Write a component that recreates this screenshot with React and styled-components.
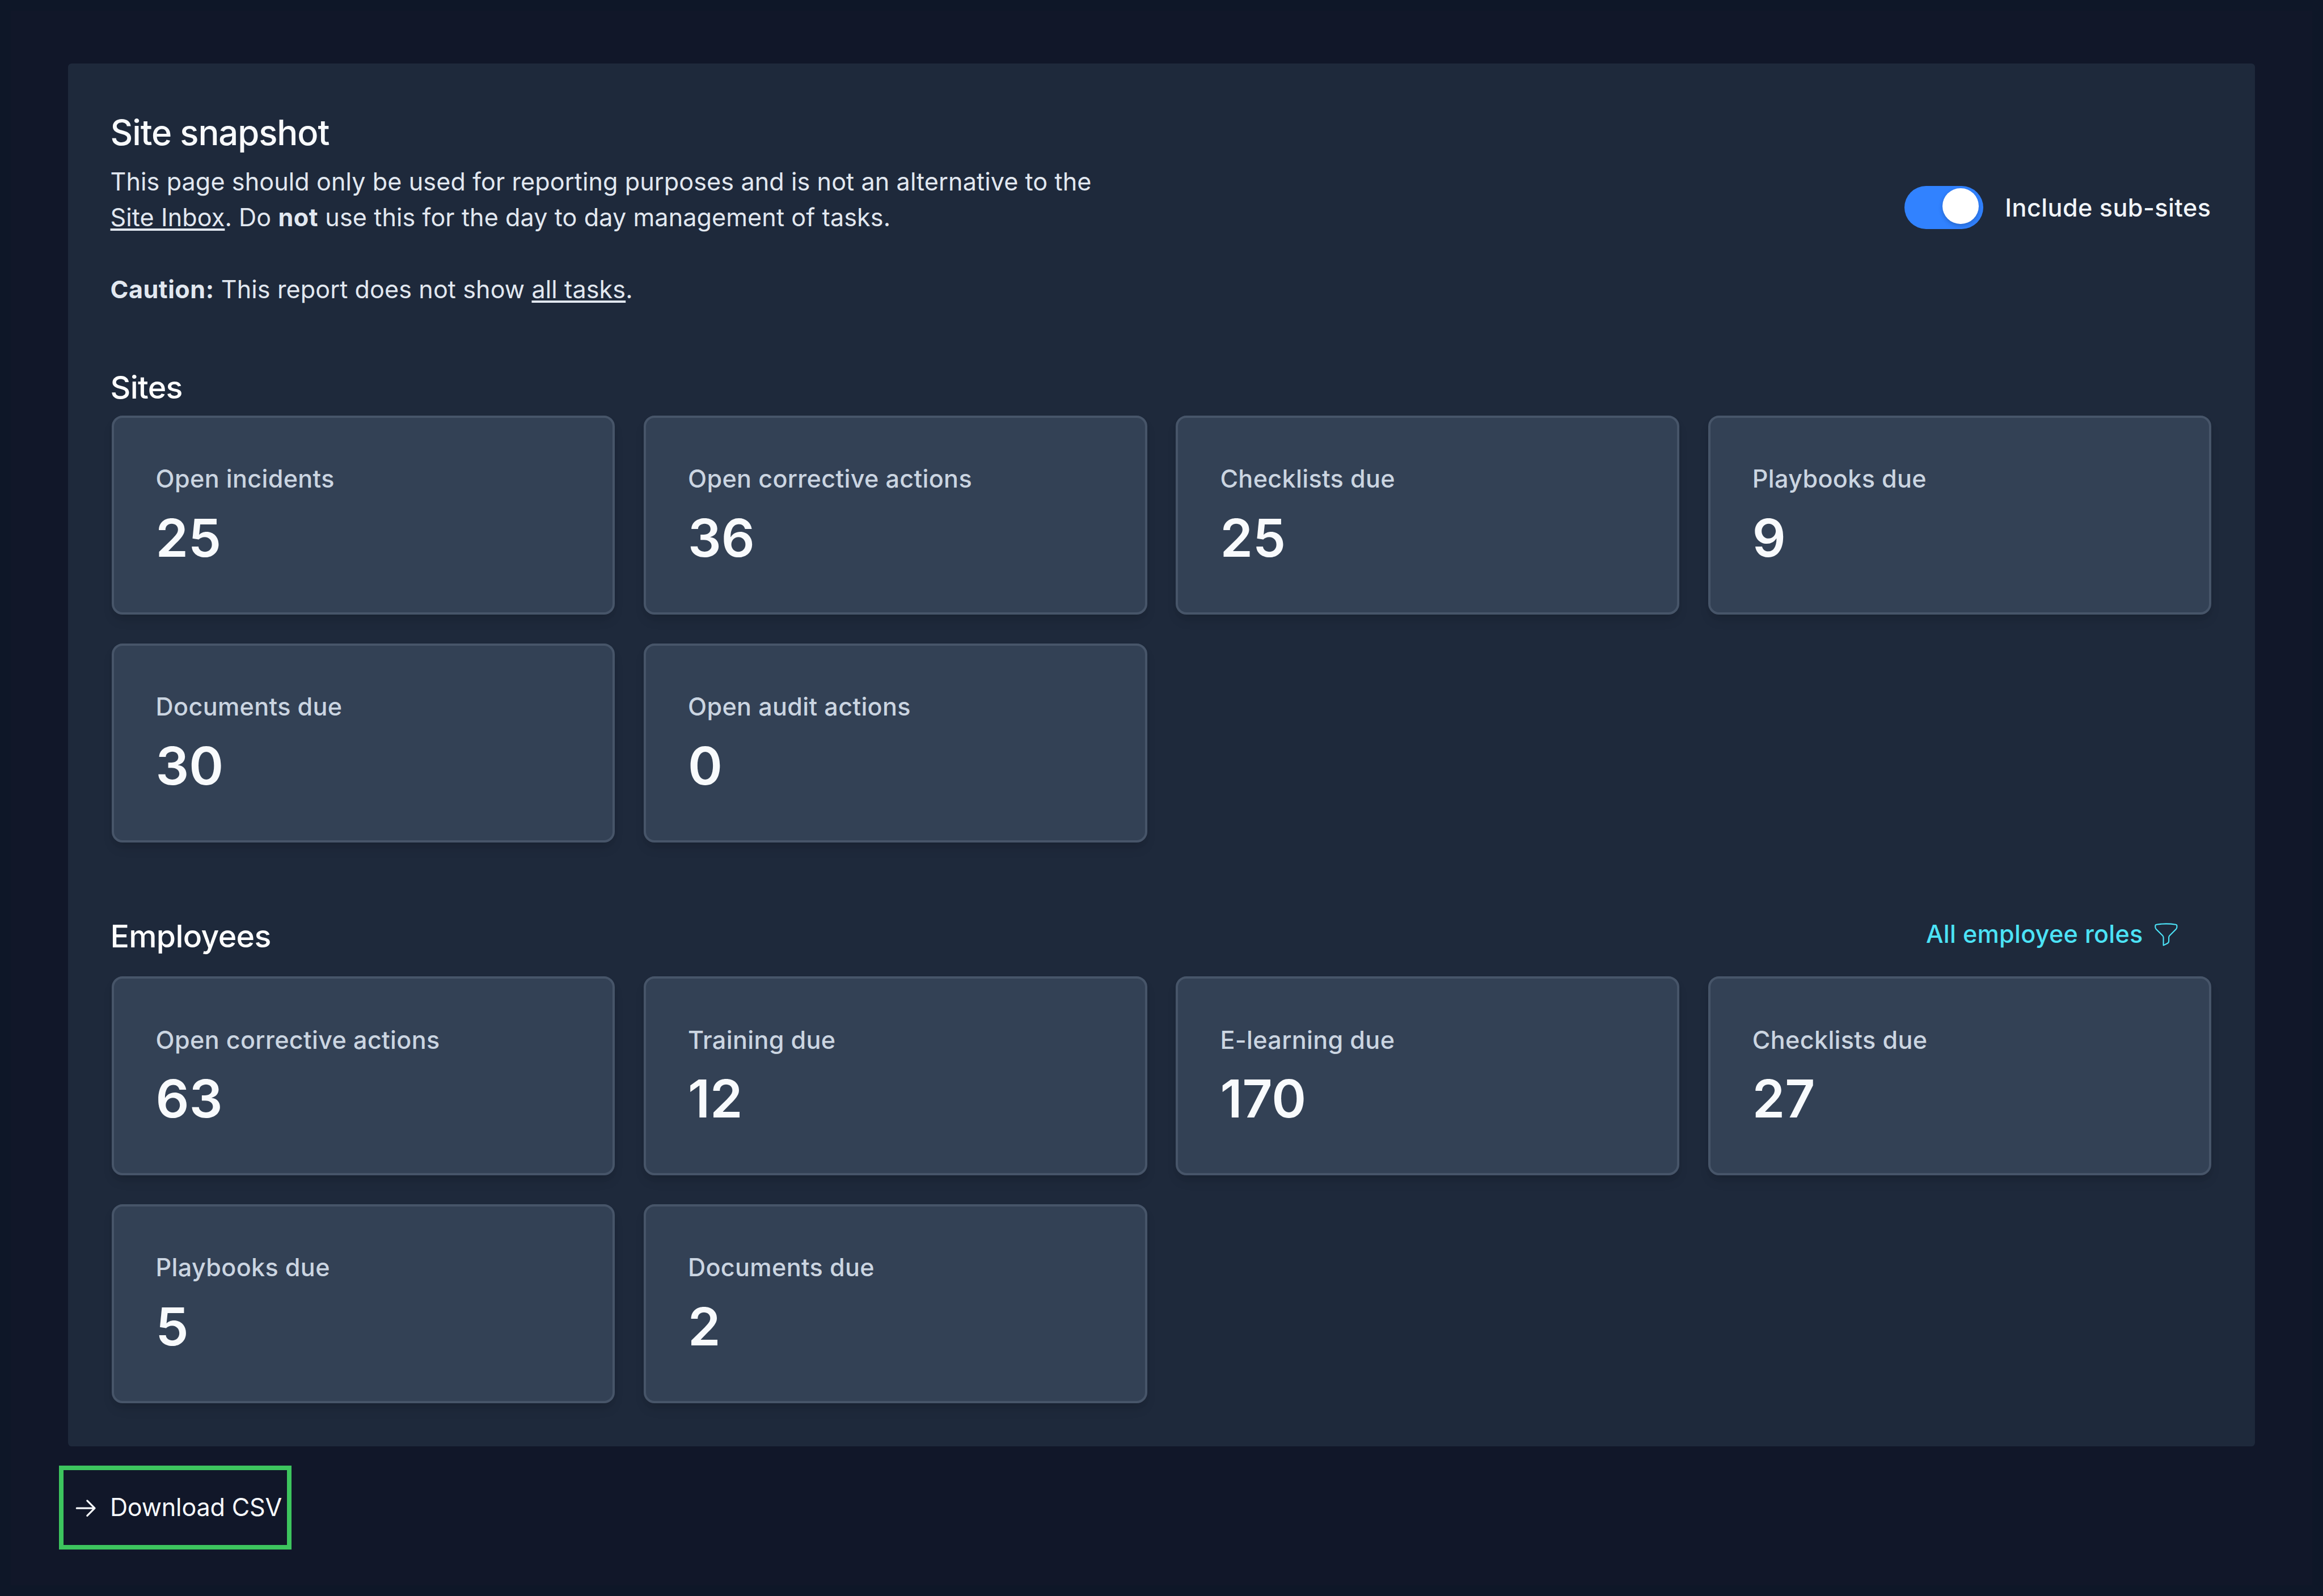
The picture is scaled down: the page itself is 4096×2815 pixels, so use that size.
import React from 'react';
import styled, { createGlobalStyle } from 'styled-components';

const GlobalStyle = createGlobalStyle`
    html {
        font-size: 50.7255px;
    }
    body {
        margin: 0;
        background-color: #0f1729;
        font-family: Inter, "Liberation Sans", sans-serif;
    }
    * {
        box-sizing: border-box;
    }
`;

const Page = styled.main`
    height: 100vh;
    padding: calc(2.2083rem - 19px) calc(2.375rem - 19px) 0;
    border: 19px solid #0e1728;
    overflow: hidden;
    background-color: #111729;
`;
const Panel = styled.section`
    padding: 1.5rem;
    border-radius: 0.125rem;
    background-color: #1e293b;
`;
const Header = styled.header`
    display: flex;
    align-items: center;
    justify-content: space-between;
`;
const Title = styled.h1`
    margin: 0.04rem 0 0.21rem -0.04rem;
    color: #f8fafc;
    font-size: 1.215rem;
    font-weight: 500;
    line-height: 1.75rem;
    letter-spacing: -0.018em;
`;
const Description = styled.p`
    margin: -0.02rem 0 0.02rem -0.04rem;
    color: #e2e8f0;
    font-size: 0.85rem;
    line-height: 1.25rem;
    letter-spacing: 0.0022em;
    white-space: nowrap;
`;
const TextLink = styled.a`
    text-decoration: underline;
    text-decoration-thickness: 4px;
    text-underline-offset: 4px;
    text-decoration-skip-ink: none;
`;
const Strong = styled.strong`
    font-weight: 700;
    letter-spacing: 0.012em;
`;
const ToggleLabel = styled.label`
    display: flex;
    align-items: center;
    gap: 0.75rem;

    color: #f1f5f9;
    font-size: 0.85rem;
    font-weight: 500;
    line-height: 1.25rem;
    letter-spacing: 0.0105em;
`;
const ToggleText = styled.span`
    margin-right: 0.02rem;
    padding-top: 0.04rem;
`;
const Switch = styled.span`
    display: flex;
    justify-content: flex-end;
    width: 2.75rem;
    height: 1.5rem;
    padding: 0.0833rem 0.1667rem;
    border-radius: 0.75rem;
    background-color: #3182ff;
`;
const Knob = styled.span`
    width: 1.25rem;
    height: 1.25rem;
    border-radius: 50%;
    background-color: white;
    box-shadow: 0 0.0625rem 0.1875rem rgba(0, 0, 0, 0.1), 0 0.0625rem 0.125rem rgba(0, 0, 0, 0.1);
`;
const SectionHeader = styled.div`
    display: flex;
    align-items: flex-start;
    justify-content: space-between;
    margin-top: ${props => props.$top};
    height: ${props => props.$height};
`;
const SectionTitle = styled.h2`
    margin: 0 0 0 -0.04rem;
    color: white;
    font-size: 1.093rem;
    font-weight: 500;
    line-height: 1.5rem;
    letter-spacing: -0.012em;
`;
const FilterButton = styled.button`
    display: flex;
    align-items: center;
    gap: 0.3rem;
    margin: 0.05rem 1.0833rem 0 0;
    padding: 0;
    border: none;
    background: none;

    color: #4ce3f7;
    font-family: inherit;
    font-size: 0.85rem;
    font-weight: 500;
    line-height: 1.25rem;
    letter-spacing: 0.0065em;
`;
const Cards = styled.div`
    display: grid;
    grid-template-columns: repeat(4, 1fr);
    gap: 1rem;
`;
const CardContainer = styled.div`
    height: 6.9167rem;
    padding: 1.5rem 1.46rem;
    border: 4px solid #475569;
    border-radius: 0.375rem;
    background-color: #334155;
    box-shadow: 0 0.25rem 0.375rem -0.0625rem rgba(0, 0, 0, 0.1), 0 0.125rem 0.25rem -0.125rem rgba(0, 0, 0, 0.1);
`;
const CardLabel = styled.div`
    color: #cbd5e1;
    font-size: 0.85rem;
    font-weight: 500;
    line-height: 1.25rem;
    letter-spacing: 0.008em;
`;
const CardValue = styled.div`
    margin-top: 0.3rem;
    color: #f8fafc;
    font-size: 1.82rem;
    font-weight: 600;
    line-height: 2.25rem;
`;
const DownloadButton = styled.button`
    display: flex;
    align-items: center;
    width: 410px;
    height: 148px;
    margin: 0.6667rem 0 0 -0.3333rem;
    padding: 0 0 0 0.36rem;
    border: 8px solid #3dc55e;
    background: none;

    color: #f8fafc;
    font-family: inherit;
    font-size: 0.85rem;
    line-height: 1.25rem;
    letter-spacing: -0.004em;
    white-space: nowrap;
`;
const Icon = styled.svg`
    flex: none;
    width: ${props => props.$size};
    height: ${props => props.$size};
    margin: ${props => props.$margin || 0};
    fill: none;
    stroke: currentColor;
    stroke-linecap: round;
    stroke-linejoin: round;
`;

const siteStats = [
    { label: 'Open incidents', value: 25 },
    { label: 'Open corrective actions', value: 36 },
    { label: 'Checklists due', value: 25 },
    { label: 'Playbooks due', value: 9 },
    { label: 'Documents due', value: 30 },
    { label: 'Open audit actions', value: 0 },
];

const employeeStats = [
    { label: 'Open corrective actions', value: 63 },
    { label: 'Training due', value: 12 },
    { label: 'E-learning due', value: 170 },
    { label: 'Checklists due', value: 27 },
    { label: 'Playbooks due', value: 5 },
    { label: 'Documents due', value: 2 },
];

const StatCards = ({ stats }) => (
    <Cards>
        {stats.map((each, idx) => (
            <CardContainer key={idx}>
                <CardLabel>{each.label}</CardLabel>
                <CardValue>{each.value}</CardValue>
            </CardContainer>
        ))}
    </Cards>
);

const App = () => (
    <Page>
        <GlobalStyle/>
        <Panel>
            <Header>
                <div>
                    <Title>Site snapshot</Title>
                    <Description>
                        This page should only be used for reporting purposes and is not an alternative to the<br/>
                        <TextLink>Site Inbox</TextLink>. Do <Strong>not</Strong> use this for the day to day management of tasks.<br/>
                        <br/>
                        <Strong>Caution:</Strong> This report does not show <TextLink>all tasks</TextLink>.
                    </Description>
                </div>
                <ToggleLabel>
                    <Switch><Knob/></Switch>
                    <ToggleText>Include sub-sites</ToggleText>
                </ToggleLabel>
            </Header>

            <SectionHeader $top="2rem" $height="1.75rem">
                <SectionTitle>Sites</SectionTitle>
            </SectionHeader>
            <StatCards stats={siteStats}/>

            <SectionHeader $top="2.51rem" $height="2.157rem">
                <SectionTitle>Employees</SectionTitle>
                <FilterButton>
                    All employee roles
                    <Icon $size="1rem" $margin="0.05rem 0 0" viewBox="0 0 24 24" strokeWidth="1">
                        <path d="M12 3c2.755 0 5.455.232 8.083.678.533.09.917.556.917 1.096v1.044a2.25 2.25 0 0 1-.659 1.591l-5.432 5.432a2.25 2.25 0 0 0-.659 1.591v2.927a2.25 2.25 0 0 1-1.244 2.013L9.75 21v-6.568a2.25 2.25 0 0 0-.659-1.591L3.659 7.409A2.25 2.25 0 0 1 3 5.818V4.774c0-.54.384-1.006.917-1.096A48.32 48.32 0 0 1 12 3Z"/>
                    </Icon>
                </FilterButton>
            </SectionHeader>
            <StatCards stats={employeeStats}/>
        </Panel>

        <DownloadButton>
            <Icon $size="0.8333rem" $margin="0.06rem 0.43rem 0 0" viewBox="0 0 24 24" strokeWidth="1.8">
                <path d="M13.5 4.5 21 12m0 0-7.5 7.5M21 12H3"/>
            </Icon>
            Download CSV
        </DownloadButton>
    </Page>
);

export default App;
